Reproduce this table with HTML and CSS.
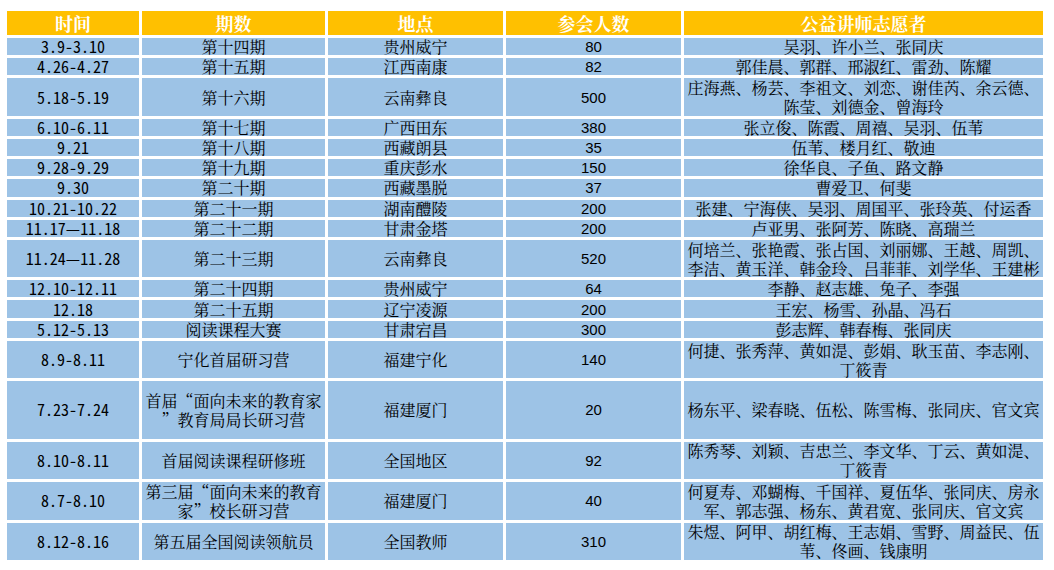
FILE: index.html
```html
<!DOCTYPE html>
<html lang="zh-CN">
<head>
<meta charset="utf-8">
<title>公益讲师志愿者</title>
<link rel="stylesheet" href="styles.css">
</head>
<body>
<div class="sheet">
  <div class="h">时间</div><div class="h">期数</div><div class="h">地点</div><div class="h">参会人数</div><div class="h">公益讲师志愿者</div>

  <div class="c date">3.9-3.10</div><div class="c">第十四期</div><div class="c">贵州威宁</div><div class="c num">80</div><div class="c">吴羽、许小兰、张同庆</div>
  <div class="c date">4.26-4.27</div><div class="c">第十五期</div><div class="c">江西南康</div><div class="c num">82</div><div class="c">郭佳晨、郭群、邢淑红、雷劲、陈耀</div>
  <div class="c s2 date">5.18-5.19</div><div class="c s2">第十六期</div><div class="c s2">云南彝良</div><div class="c s2 num">500</div><div class="c s2">庄海燕、杨芸、李祖文、刘恋、谢佳芮、余云德、<br>陈莹、刘德金、曾海玲</div>
  <div class="c date">6.10-6.11</div><div class="c">第十七期</div><div class="c">广西田东</div><div class="c num">380</div><div class="c">张立俊、陈霞、周禧、吴羽、伍苇</div>
  <div class="c date">9.21</div><div class="c">第十八期</div><div class="c">西藏朗县</div><div class="c num">35</div><div class="c">伍苇、楼月红、敬迪</div>
  <div class="c date">9.28-9.29</div><div class="c">第十九期</div><div class="c">重庆彭水</div><div class="c num">150</div><div class="c">徐华良、子鱼、路文静</div>
  <div class="c date">9.30</div><div class="c">第二十期</div><div class="c">西藏墨脱</div><div class="c num">37</div><div class="c">曹爱卫、何斐</div>
  <div class="c date">10.21-10.22</div><div class="c">第二十一期</div><div class="c">湖南醴陵</div><div class="c num">200</div><div class="c">张建、宁海侠、吴羽、周国平、张玲英、付运香</div>
  <div class="c date">11.17—11.18</div><div class="c">第二十二期</div><div class="c">甘肃金塔</div><div class="c num">200</div><div class="c">卢亚男、张阿芳、陈晓、高瑞兰</div>
  <div class="c s2 date">11.24—11.28</div><div class="c s2">第二十三期</div><div class="c s2">云南彝良</div><div class="c s2 num">520</div><div class="c s2">何培兰、张艳霞、张占国、刘丽娜、王越、周凯、<br>李洁、黄玉洋、韩金玲、吕菲菲、刘学华、王建彬</div>
  <div class="c date">12.10-12.11</div><div class="c">第二十四期</div><div class="c">贵州威宁</div><div class="c num">64</div><div class="c">李静、赵志雄、兔子、李强</div>
  <div class="c date">12.18</div><div class="c">第二十五期</div><div class="c">辽宁凌源</div><div class="c num">200</div><div class="c">王宏、杨雪、孙晶、冯石</div>
  <div class="c date">5.12-5.13</div><div class="c">阅读课程大赛</div><div class="c">甘肃宕昌</div><div class="c num">300</div><div class="c">彭志辉、韩春梅、张同庆</div>
  <div class="c s2 date">8.9-8.11</div><div class="c s2">宁化首届研习营</div><div class="c s2">福建宁化</div><div class="c s2 num">140</div><div class="c s2">何捷、张秀萍、黄如湜、彭娟、耿玉苗、李志刚、<br>丁筱青</div>
  <div class="c s3 date">7.23-7.24</div><div class="c s3">首届“面向未来的教育家<br>”教育局局长研习营</div><div class="c s3">福建厦门</div><div class="c s3 num">20</div><div class="c s3">杨东平、梁春晓、伍松、陈雪梅、张同庆、官文宾</div>
  <div class="c s2 date">8.10-8.11</div><div class="c s2">首届阅读课程研修班</div><div class="c s2">全国地区</div><div class="c s2 num">92</div><div class="c s2">陈秀琴、刘颖、吉忠兰、李文华、丁云、黄如湜、<br>丁筱青</div>
  <div class="c s2 date">8.7-8.10</div><div class="c s2">第三届“面向未来的教育<br>家”校长研习营</div><div class="c s2">福建厦门</div><div class="c s2 num">40</div><div class="c s2">何夏寿、邓蝴梅、千国祥、夏伍华、张同庆、房永<br>军、郭志强、杨东、黄君宽、张同庆、官文宾</div>
  <div class="c s2 date">8.12-8.16</div><div class="c s2">第五届全国阅读领航员</div><div class="c s2">全国教师</div><div class="c s2 num">310</div><div class="c s2">朱煜、阿甲、胡红梅、王志娟、雪野、周益民、伍<br>苇、佟画、钱康明</div>
</div>
</body>
</html>
```

FILE: styles.css
```css
html, body {
  margin: 0;
  background: #ffffff;
}

body {
  padding: 11px 0 0 7px;
}

.sheet {
  display: grid;
  grid-template-columns: 132px 183px 175px 175px 359px;
  grid-template-rows: 24px repeat(26, 17.2px);
  column-gap: 3px;
  row-gap: 3px;
  width: max-content;
}

.h {
  background: #ffc000;
  color: #ffffff;
  font-family: "Noto Serif CJK SC", "Noto Sans CJK SC", sans-serif;
  font-weight: bold;
  font-size: 18px;
  line-height: 22px;
  display: flex;
  align-items: center;
  justify-content: center;
}

.c {
  background: #9dc3e6;
  color: #000000;
  font-family: "Noto Serif CJK SC", "Noto Sans CJK SC", sans-serif;
  font-size: 16px;
  line-height: 19px;
  display: flex;
  align-items: center;
  justify-content: center;
  text-align: center;
  white-space: nowrap;
}

.s2 {
  grid-row: span 2;
}

.s3 {
  grid-row: span 3;
}

.date {
  font-family: "Noto Sans Mono CJK SC", "DejaVu Sans Mono", monospace;
  font-size: 16px;
}

.num {
  font-family: "Liberation Sans", Arial, sans-serif;
  font-size: 15px;
}
```
